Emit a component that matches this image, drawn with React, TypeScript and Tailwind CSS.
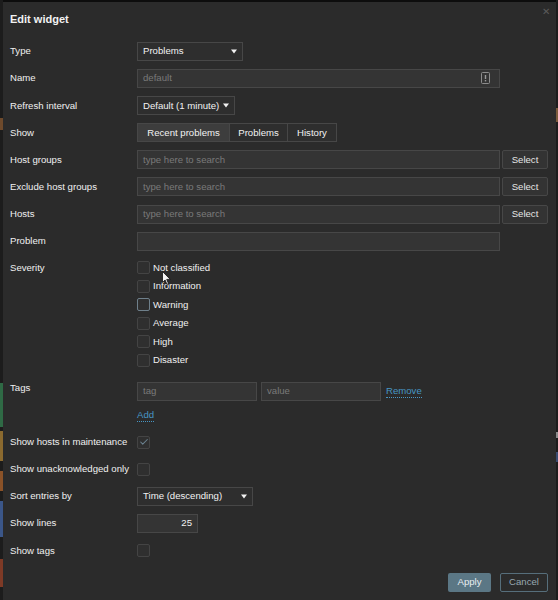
import { Check } from "lucide-react"

const severities = ["Not classified", "Information", "Warning", "Average", "High", "Disaster"]

const Label = ({ children }: { children: React.ReactNode }) => (
  <div className="w-[127px] shrink-0 text-[#f0f0f0]">{children}</div>
)

const Arrow = () => (
  <svg width="6" height="5" viewBox="0 0 6 5" className="shrink-0">
    <path d="M0 0.5h6L3 4.5z" fill="#f2f2f2" />
  </svg>
)

const Select = ({ text, w }: { text: string; w: string }) => (
  <div
    className={`${w} h-[19px] flex items-center justify-between pl-[5px] pr-[5px] bg-[#2e2e2e] border border-[#474747] text-[#f2f2f2]`}
  >
    <span>{text}</span>
    <Arrow />
  </div>
)

const Input = ({ placeholder, w = "w-[363px]" }: { placeholder?: string; w?: string }) => (
  <div className={`${w} h-[19px] flex items-center px-[5px] bg-[#343434] border border-[#474747] text-[#7a7a7a]`}>
    {placeholder}
  </div>
)

const Box = ({ checked, hover }: { checked?: boolean; hover?: boolean }) => (
  <div
    className={`w-[13px] h-[13px] shrink-0 rounded-[2px] bg-[#2f2f2f] border flex items-center justify-center ${
      hover ? "border-[#6f808b]" : "border-[#444444]"
    }`}
  >
    {checked && <Check size={10} strokeWidth={2.5} color="#6c8391" />}
  </div>
)

const Row = ({ label, children }: { label: string; children?: React.ReactNode }) => (
  <div className="h-[27.14px] flex items-center">
    <Label>{label}</Label>
    {children}
  </div>
)

const SelectButton = () => (
  <div className="w-[46px] h-[19px] ml-[2px] flex items-center justify-center bg-[#333333] border border-[#474747] rounded-[2px] text-[#e6e6e6]">
    Select
  </div>
)

const LeftStrip = () => (
  <div className="w-[3px] h-full flex flex-col bg-[#1c1c1c]">
    <div className="h-[118px]" />
    <div className="h-[12px] bg-[#6e4a2c]" />
    <div className="h-[253px]" />
    <div className="h-[44px] bg-[#2f6a45]" />
    <div className="h-[4px]" />
    <div className="h-[30px] bg-[#8b6a2f]" />
    <div className="h-[10px]" />
    <div className="h-[20px] bg-[#8a5228]" />
    <div className="h-[10px]" />
    <div className="h-[36px] bg-[#3b5688]" />
    <div className="h-[22px]" />
    <div className="h-[28px] bg-[#7e3a26]" />
  </div>
)

const RightStrip = () => (
  <div className="w-[2px] h-full flex flex-col bg-[#1c1c1c]">
    <div className="h-[108px]" />
    <div className="h-[14px] bg-[#7a5a3c]" />
    <div className="h-[310px]" />
    <div className="h-[6px] bg-[#8a8a8a]" />
    <div className="h-[14px]" />
    <div className="h-[10px] bg-[#3a4b70]" />
  </div>
)

const App = () => {
  return (
    <div className="w-[558px] h-[600px] flex bg-[#0d0d0d] overflow-hidden font-['Liberation_Sans',Arial,sans-serif] text-[9.6px] leading-[12px]">
      <LeftStrip />
      <div className="relative flex-1 mt-[2px] bg-[#2b2b2b] flex flex-col pl-[7px] pr-[8px]">
        <div className="flex justify-between pt-[10.5px]">
          <h1 className="text-[11px] leading-[13px] font-bold text-[#f2f2f2]">Edit widget</h1>
          <span className="-mt-[7px] mr-[-2px] text-[10px] text-[#5a5a5a]">✕</span>
        </div>

        <div className="mt-[12.2px] flex flex-col">
          <Row label="Type">
            <Select text="Problems" w="w-[106px]" />
          </Row>
          <Row label="Name">
            <div className="w-[363px] h-[19px] flex items-center justify-between pl-[5px] pr-[9px] bg-[#343434] border border-[#474747] text-[#7a7a7a]">
              <span>default</span>
              <svg width="9" height="12" viewBox="0 0 9 12">
                <rect x="0.5" y="0.5" width="8" height="11" rx="1" fill="none" stroke="#8c8c8c" />
                <path d="M4.5 3v4" stroke="#9a9a9a" strokeWidth="1.4" />
                <rect x="3.8" y="8" width="1.4" height="1.4" fill="#9a9a9a" />
              </svg>
            </div>
          </Row>
          <Row label="Refresh interval">
            <Select text="Default (1 minute)" w="w-[98px]" />
          </Row>
          <Row label="Show">
            <div className="flex h-[19px] border border-[#474747] text-[#f2f2f2]">
              <div className="w-[91px] flex items-center justify-center bg-[#3d3d3d]">Recent problems</div>
              <div className="w-[58px] flex items-center justify-center bg-[#2e2e2e] border-l border-[#474747]">
                Problems
              </div>
              <div className="w-[49px] flex items-center justify-center bg-[#2e2e2e] border-l border-[#474747]">
                History
              </div>
            </div>
          </Row>
          <Row label="Host groups">
            <Input placeholder="type here to search" />
            <SelectButton />
          </Row>
          <Row label="Exclude host groups">
            <Input placeholder="type here to search" />
            <SelectButton />
          </Row>
          <Row label="Hosts">
            <Input placeholder="type here to search" />
            <SelectButton />
          </Row>
          <Row label="Problem">
            <Input />
          </Row>

          <div className="flex pb-[8.2px]">
            <div className="h-[27.14px] flex items-center">
              <Label>Severity</Label>
            </div>
            <div className="relative flex flex-col pt-[3.7px]">
              {severities.map((s) => (
                <div key={s} className="h-[18.5px] flex items-center gap-[3px] text-[#f0f0f0]">
                  <Box hover={s === "Warning"} />
                  <span>{s}</span>
                </div>
              ))}
              <svg
                width="9"
                height="14"
                viewBox="0 0 9 14"
                className="absolute left-[25px] top-[16px]"
              >
                <path d="M0.5 0.5v11l2.6-2.5 1.8 4.3 1.6-0.7-1.8-4.2h3.6z" fill="#f5f5f5" stroke="#111" strokeWidth="0.8" />
              </svg>
            </div>
          </div>

          <div className="h-[27.14px] flex items-center">
            <div className="w-[127px] shrink-0 self-start pt-[4px] text-[#f0f0f0]">Tags</div>
            <Input placeholder="tag" w="w-[120px]" />
            <div className="ml-[4px]">
              <Input placeholder="value" w="w-[120px]" />
            </div>
            <span className="ml-[5px] text-[#4796c4] border-b border-dotted border-[#4796c4]">Remove</span>
          </div>
          <div className="h-[23.86px] flex">
            <div className="w-[127px] shrink-0" />
            <div className="pt-[4px]">
              <span className="inline-block text-[#4796c4] border-b border-dotted border-[#4796c4]">Add</span>
            </div>
          </div>

          <Row label="Show hosts in maintenance">
            <Box checked />
          </Row>
          <Row label="Show unacknowledged only">
            <Box />
          </Row>
          <Row label="Sort entries by">
            <Select text="Time (descending)" w="w-[116px]" />
          </Row>
          <Row label="Show lines">
            <div className="w-[61px] h-[19px] flex items-center justify-end px-[5px] bg-[#343434] border border-[#474747] text-[#f2f2f2]">
              25
            </div>
          </Row>
          <Row label="Show tags">
            <Box />
          </Row>
        </div>

        <div className="mt-[8.5px] flex justify-end gap-[9px]">
          <div className="w-[43px] h-[19px] flex items-center justify-center bg-[#5b7785] rounded-[2px] text-[#e9eef1]">
            Apply
          </div>
          <div className="w-[48px] h-[19px] flex items-center justify-center border border-[#566e7b] rounded-[2px] text-[#98a8b1]">
            Cancel
          </div>
        </div>
      </div>
      <RightStrip />
    </div>
  )
}

export default App
